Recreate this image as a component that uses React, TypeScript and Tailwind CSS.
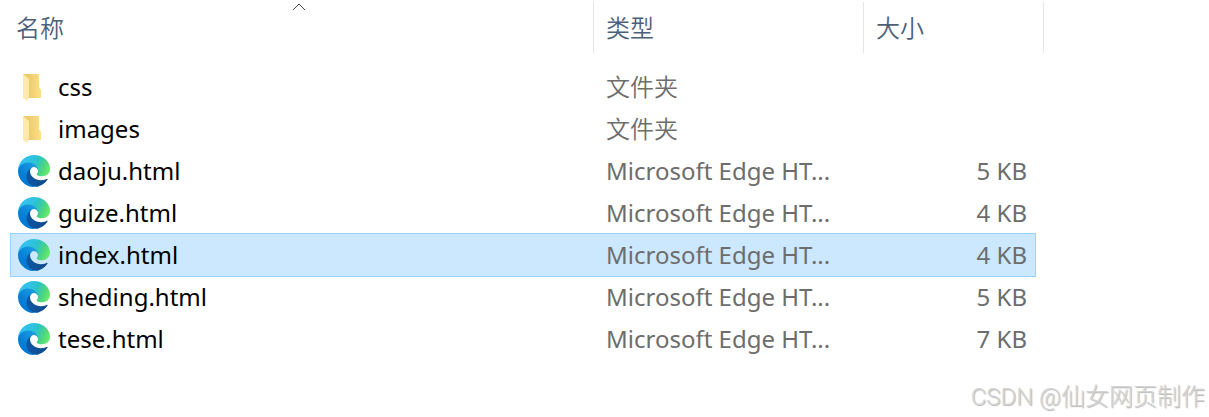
type FileKind = "folder" | "html";

interface FileEntry {
  name: string;
  kind: FileKind;
  size?: string;
  selected?: boolean;
}

const files: FileEntry[] = [
  { name: "css", kind: "folder" },
  { name: "images", kind: "folder" },
  { name: "daoju.html", kind: "html", size: "5 KB" },
  { name: "guize.html", kind: "html", size: "4 KB" },
  { name: "index.html", kind: "html", size: "4 KB", selected: true },
  { name: "sheding.html", kind: "html", size: "5 KB" },
  { name: "tese.html", kind: "html", size: "7 KB" },
];

function FolderIcon() {
  return (
    <svg viewBox="0 0 32 32" className="h-8 w-8 shrink-0" aria-hidden="true">
      <path d="M5 3h16v13l2 3v8H10z" fill="url(#folder-back)" />
      <path d="M5 3l6 5v18h-1v4l-5-3z" fill="url(#folder-front)" />
    </svg>
  );
}

function EdgeIcon() {
  return (
    <svg viewBox="0 0 256 256" className="h-8 w-8 shrink-0" aria-hidden="true">
      <g transform="translate(-4.63 -4.92)">
        <path
          d="M235.68 195.46a93.73 93.73 0 0 1-10.54 4.71 101.87 101.87 0 0 1-35.9 6.46c-47.32 0-88.54-32.55-88.54-74.32A31.48 31.48 0 0 1 117.13 105c-42.8 1.8-53.8 46.4-53.8 72.53 0 73.88 68.09 81.37 82.76 81.37 7.91 0 19.84-2.3 27-4.56l1.31-.44a128.34 128.34 0 0 0 66.6-52.8 4 4 0 0 0-5.32-5.64z"
          fill="url(#edge-navy)"
        />
        <path
          d="M110.34 246.34A79.2 79.2 0 0 1 87.6 225a80.72 80.72 0 0 1 29.53-120c3.12-1.47 8.45-4.13 15.54-4a32.35 32.35 0 0 1 25.69 13 31.88 31.88 0 0 1 6.36 18.66c0-.21 24.46-79.6-80-79.6-43.9 0-80 41.66-80 78.21a130.15 130.15 0 0 0 12.11 56 128 128 0 0 0 156.38 67.11 75.55 75.55 0 0 1-62.78-8z"
          fill="url(#edge-blue)"
        />
        <path
          d="M156.94 153.78c-.81 1.05-3.3 2.5-3.3 5.66 0 2.61 1.7 5.12 4.72 7.23 14.38 10 41.49 8.68 41.56 8.68a59.56 59.56 0 0 0 30.27-8.35A61.38 61.38 0 0 0 260.62 114c.26-22.41-8-37.31-11.34-43.91C228.09 28.76 182.35 4.92 132.61 4.92a128 128 0 0 0-128 126.2c.48-36.54 36.8-66.05 80-66.05 3.5 0 23.46.34 42 10.07 16.34 8.58 24.9 18.94 30.85 29.21 6.18 10.67 7.28 24.15 7.28 29.52s-2.74 13.33-7.8 19.91z"
          fill="url(#edge-green)"
        />
      </g>
    </svg>
  );
}

// Gradients shared by every icon in the list
function IconGradients() {
  return (
    <svg className="absolute h-0 w-0" aria-hidden="true">
      <defs>
        <linearGradient id="folder-back" x1="0" y1="0" x2="1" y2="0">
          <stop offset="0.3" stopColor="#eccb6c" />
          <stop offset="1" stopColor="#ffdf86" />
        </linearGradient>
        <linearGradient id="folder-front" x1="0" y1="0" x2="0" y2="1">
          <stop offset="0" stopColor="#ffeaa6" />
          <stop offset="1" stopColor="#ffe9ae" />
        </linearGradient>
        <linearGradient id="edge-navy" gradientUnits="userSpaceOnUse" x1="63" y1="178" x2="241" y2="178">
          <stop offset="0" stopColor="#0c59a4" />
          <stop offset="1" stopColor="#114a8b" />
        </linearGradient>
        <linearGradient id="edge-blue" gradientUnits="userSpaceOnUse" x1="157" y1="100" x2="46" y2="221">
          <stop offset="0" stopColor="#1b9de2" />
          <stop offset="0.16" stopColor="#1595df" />
          <stop offset="0.67" stopColor="#0680d7" />
          <stop offset="1" stopColor="#0078d4" />
        </linearGradient>
        <linearGradient id="edge-green" gradientUnits="userSpaceOnUse" x1="40" y1="50" x2="245" y2="140">
          <stop offset="0" stopColor="#35c1f1" />
          <stop offset="0.3" stopColor="#2fc2df" />
          <stop offset="0.5" stopColor="#2bc3c8" />
          <stop offset="0.8" stopColor="#4fd67c" />
          <stop offset="1" stopColor="#66eb6e" />
        </linearGradient>
      </defs>
    </svg>
  );
}

function SortCaret() {
  return (
    <svg viewBox="0 0 14 8" className="h-2 w-3.5" fill="none" stroke="#444" aria-hidden="true">
      <path d="M1 8l6-6 6 6" />
    </svg>
  );
}

export default function App() {
  return (
    <main className="relative min-h-screen bg-white pt-0.5 pr-[174px] pl-[11px] font-['Noto_Sans','Noto_Sans_CJK_SC',sans-serif] text-2xl">
      <IconGradients />
      <table className="w-full table-fixed border-separate border-spacing-0 text-left text-[#6d6d6d]">
        <colgroup>
          <col />
          <col className="w-[270px]" />
          <col className="w-[171px]" />
        </colgroup>
        <thead className="text-[#4c607a]">
          <tr>
            <th scope="col" aria-sort="ascending" className="relative p-0 font-[350]">
              <div className="h-[51px] border-r border-[#e5e5e5] pt-2.5 pl-[5px]">名称</div>
              <span className="absolute top-0 right-0 -left-2 flex justify-center">
                <SortCaret />
              </span>
            </th>
            <th scope="col" className="p-0 font-[350]">
              <div className="h-[51px] border-r border-[#e5e5e5] pt-2.5 pl-3">类型</div>
            </th>
            <th scope="col" className="p-0 font-[350]">
              {/* the header reaches a little past the selectable row */}
              <div className="-mr-[9px] h-[51px] border-r border-[#e5e5e5] pt-2.5 pl-3">大小</div>
            </th>
          </tr>
          <tr aria-hidden="true">
            <td colSpan={3} className="h-[13px] p-0" />
          </tr>
        </thead>
        <tbody>
          {files.map((file) => (
            <tr
              key={file.name}
              aria-selected={file.selected}
              className={file.selected ? "bg-[#cce8ff] outline outline-[#99d1ff]" : ""}
            >
              <td className="h-[42px] p-0 pl-[7px] text-black">
                <div className="flex items-center gap-2">
                  {file.kind === "folder" ? <FolderIcon /> : <EdgeIcon />}
                  <span className="truncate">{file.name}</span>
                </div>
              </td>
              <td className="p-0 pl-3 whitespace-nowrap">
                {file.kind === "folder" ? <span className="font-[350]">文件夹</span> : "Microsoft Edge HT..."}
              </td>
              <td className="p-0 pr-2 text-right">{file.size}</td>
            </tr>
          ))}
        </tbody>
      </table>

      <p className="absolute right-1 bottom-1 font-['Roboto','Noto_Sans_CJK_SC',sans-serif] font-light text-[#d4d4d4] [text-shadow:1px_1px_1px_#b4b4b4]">
        CSDN @仙女网页制作
      </p>
    </main>
  );
}
